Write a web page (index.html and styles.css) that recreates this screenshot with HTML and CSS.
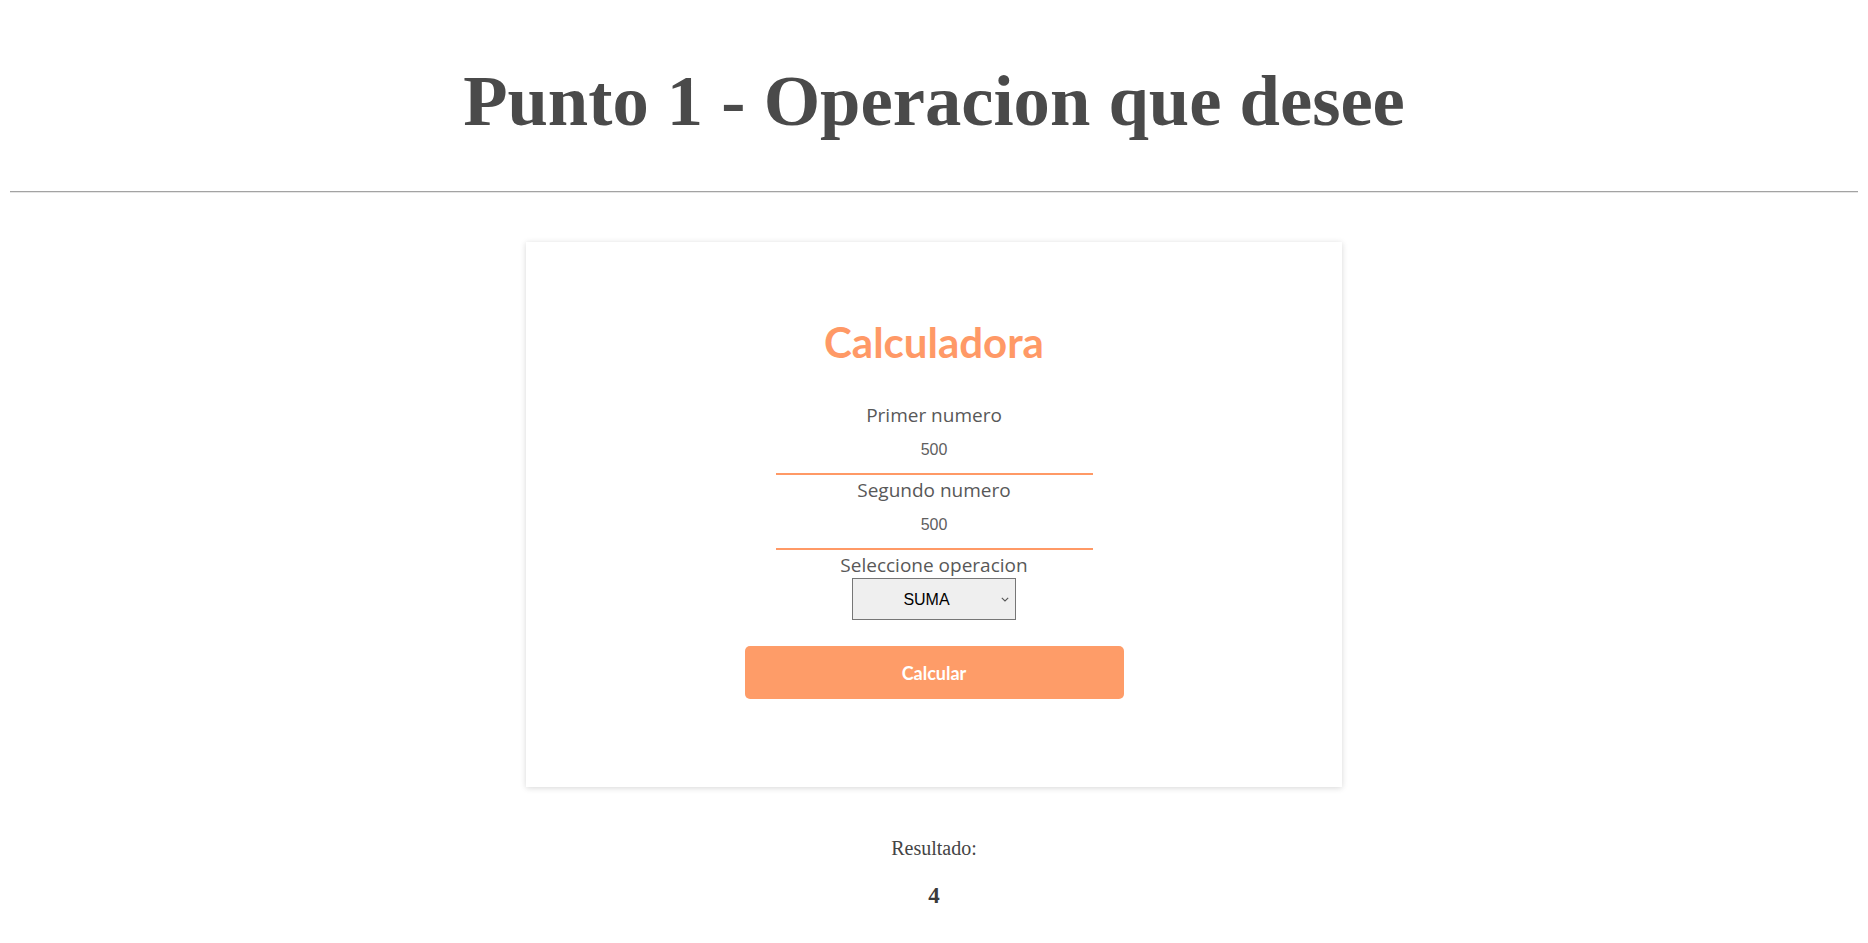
FILE: index.html
```html
<!DOCTYPE html>
<html lang="es">
<head>
<meta charset="utf-8">
<title>Punto 1 - Operacion que desee</title>
<link rel="stylesheet" href="styles.css">
</head>
<body>
  <header class="page-header">
    <h1 class="page-title">Punto 1 - Operacion que desee</h1>
  </header>
  <hr class="divider">
  <main class="card">
    <h2 class="card-title">Calculadora</h2>
    <label class="field-label" for="n1">Primer numero</label>
    <input class="field-input" id="n1" type="text" value="500">
    <label class="field-label gap" for="n2">Segundo numero</label>
    <input class="field-input" id="n2" type="text" value="500">
    <label class="field-label gap" for="op">Seleccione operacion</label>
    <div class="select-wrap">
      <select class="field-select" id="op">
        <option>SUMA</option>
        <option>RESTA</option>
        <option>MULTIPLICACION</option>
        <option>DIVISION</option>
      </select>
      <svg class="select-arrow" width="8" height="5" viewBox="0 0 8 5" aria-hidden="true">
        <path d="M0.8 0.8 L4 4 L7.2 0.8" fill="none" stroke="#555" stroke-width="1.1"/>
      </svg>
    </div>
    <button class="calc-btn" type="button">Calcular</button>
  </main>
  <section class="result">
    <p class="result-label">Resultado:</p>
    <p class="result-value">4</p>
  </section>
</body>
</html>
```

FILE: styles.css
```css
html, body {
  margin: 0;
  padding: 0;
  background: #ffffff;
}

body {
  font-family: "Liberation Serif", "Times New Roman", serif;
  color: #4a4a4a;
}

.page-header {
  padding-top: 60px;
  text-align: center;
}

.page-title {
  margin: 0;
  font-family: "Liberation Serif", "Times New Roman", serif;
  font-weight: bold;
  font-size: 72.6px;
  line-height: 82px;
  color: #4a4a4a;
}

.divider {
  margin: 49px 10px 0 10px;
  height: 0;
  border: none;
  border-top: 1px solid #a3a3a3;
  border-bottom: 1px solid #e6e6e6;
}

.card {
  box-sizing: border-box;
  width: 816px;
  height: 545px;
  margin: 49px auto 0 auto;
  padding: 75px 0 88px 0;
  background: #ffffff;
  box-shadow: 0 1px 6px rgba(0, 0, 0, 0.16);
  display: flex;
  flex-direction: column;
  align-items: center;
}

.card-title {
  margin: 0 0 37px 0;
  font-family: Lato, "Open Sans", sans-serif;
  font-weight: bold;
  font-size: 42px;
  line-height: 50px;
  color: #ff9966;
}

.field-label {
  display: block;
  font-family: "Open Sans", "Noto Sans", sans-serif;
  font-size: 19px;
  line-height: 22px;
  color: #585858;
}

.field-label.gap {
  margin-top: 4px;
}

.field-input {
  box-sizing: border-box;
  width: 317px;
  height: 49px;
  margin: 0;
  padding: 0;
  border: none;
  border-bottom: 2px solid #ff9966;
  background: transparent;
  outline: none;
  text-align: center;
  font-family: "Liberation Sans", Arial, sans-serif;
  font-size: 16px;
  color: #606060;
}

.select-wrap {
  position: relative;
  margin-top: 2px;
  width: 164px;
  height: 42px;
}

.field-select {
  box-sizing: border-box;
  width: 164px;
  height: 42px;
  margin: 0;
  padding: 0 18px 0 3px;
  border: 1px solid #767676;
  border-radius: 0;
  background: #efefef;
  -webkit-appearance: none;
  appearance: none;
  font-family: "Liberation Sans", Arial, sans-serif;
  font-size: 16px;
  color: #000000;
  text-align: center;
  text-align-last: center;
  outline: none;
}

.select-arrow {
  position: absolute;
  right: 7px;
  top: 19px;
  pointer-events: none;
}

.calc-btn {
  margin-top: 26px;
  width: 379px;
  height: 53px;
  border: none;
  border-radius: 5px;
  background: #fe9c68;
  color: #ffffff;
  font-family: Lato, "Open Sans", sans-serif;
  font-weight: bold;
  font-size: 18px;
  cursor: pointer;
}

.result {
  margin-top: 50px;
  text-align: center;
}

.result-label {
  margin: 0;
  font-family: "Liberation Serif", "Times New Roman", serif;
  font-size: 20px;
  line-height: 23px;
  color: #444444;
}

.result-value {
  margin: 23px 0 0 0;
  font-family: "Liberation Serif", "Times New Roman", serif;
  font-weight: bold;
  font-size: 23px;
  line-height: 26px;
  color: #3a3a3a;
}
```
